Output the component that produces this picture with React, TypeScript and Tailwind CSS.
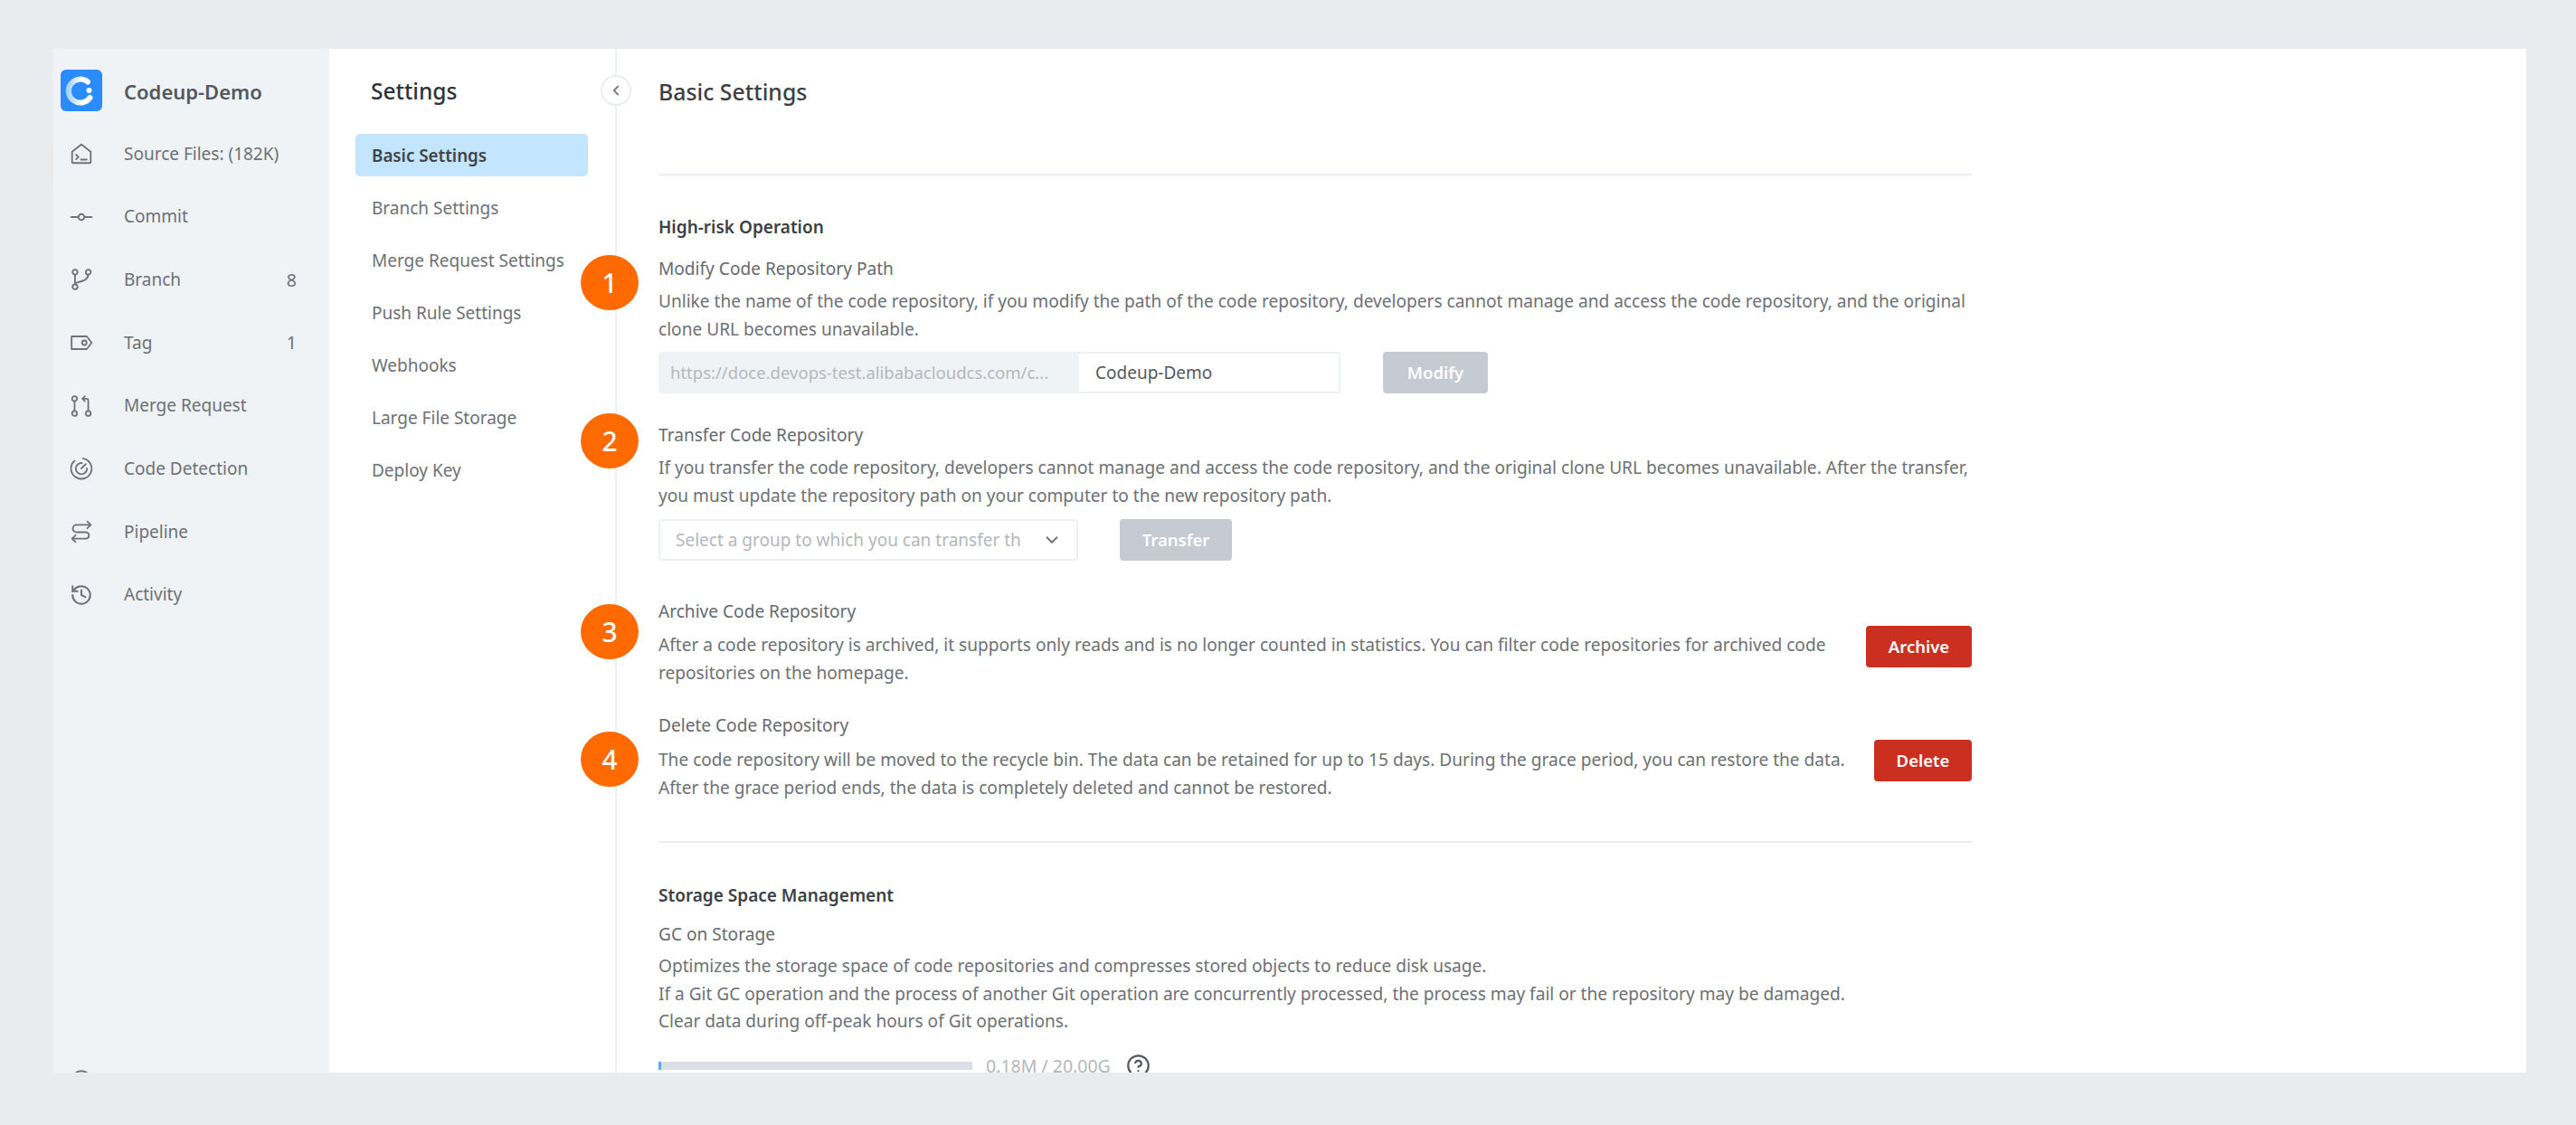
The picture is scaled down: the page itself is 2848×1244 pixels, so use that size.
import type { ReactNode } from 'react';
import { ChevronDown, ChevronLeft, CircleHelp, History } from 'lucide-react';

const font = '[font-family:"Noto_Sans",sans-serif]';

function Icon({ children }: { children: ReactNode }) {
  return (
    <svg
      width="26"
      height="26"
      viewBox="0 0 24 24"
      fill="none"
      stroke="#707377"
      strokeWidth="1.7"
      strokeLinecap="round"
      strokeLinejoin="round"
    >
      {children}
    </svg>
  );
}

const navItems: { label: string; count?: string; icon: ReactNode }[] = [
  {
    label: 'Source Files: (182K)',
    icon: (
      <Icon>
        <path d="M12 2.5 21.5 10v10.5a1 1 0 0 1-1 1h-17a1 1 0 0 1-1-1V10z" />
        <path d="m6.5 13 2.5 2.3-2.5 2.3M11.5 18h6" />
      </Icon>
    ),
  },
  {
    label: 'Commit',
    icon: (
      <Icon>
        <path d="M1.5 12h7M15.5 12h7" />
        <circle cx="12" cy="12" r="3" />
      </Icon>
    ),
  },
  {
    label: 'Branch',
    count: '8',
    icon: (
      <Icon>
        <circle cx="5.5" cy="4.5" r="2.5" />
        <circle cx="5.5" cy="19.5" r="2.5" />
        <circle cx="19" cy="4.5" r="2.5" />
        <path d="M5.5 7v10M19 7c0 5-4 6.500-13 8.500" />
      </Icon>
    ),
  },
  {
    label: 'Tag',
    count: '1',
    icon: (
      <Icon>
        <path d="M2 5.500h15.500L22.500 12l-5 6.500H2z" />
        <circle cx="15" cy="12" r="2.300" />
      </Icon>
    ),
  },
  {
    label: 'Merge Request',
    icon: (
      <Icon>
        <circle cx="5" cy="4.500" r="2.500" />
        <circle cx="5" cy="19.500" r="2.500" />
        <circle cx="19" cy="19.500" r="2.500" />
        <path d="M5 7v10M19 17V6.500a2 2 0 0 0-2-2h-4M15.500 2 13 4.500 15.500 7" />
      </Icon>
    ),
  },
  {
    label: 'Code Detection',
    icon: (
      <Icon>
        <path d="M13.500 1.700A10.500 10.500 0 1 1 5 4.200" />
        <path d="M12.500 6.500A5.700 5.700 0 1 0 17.700 12" />
        <path d="m12 12 4.500-4.500" />
      </Icon>
    ),
  },
  {
    label: 'Pipeline',
    icon: (
      <Icon>
        <path d="m18 1.500 3.500 3.500L18 8.500" />
        <path d="M21 5H7a3.500 3.500 0 0 0 0 7.500h10a3.300 3.300 0 0 1 0 6.500H3" />
        <path d="M6 15.500 2.500 19 6 22.500" />
      </Icon>
    ),
  },
  {
    label: 'Activity',
    icon: <History size={26} color="#707377" strokeWidth={1.9} />,
  },
];

const settingsItems = [
  'Basic Settings',
  'Branch Settings',
  'Merge Request Settings',
  'Push Rule Settings',
  'Webhooks',
  'Large File Storage',
  'Deploy Key',
];

function Logo() {
  return (
    <svg width="46" height="46" viewBox="0 0 46 46" className="shrink-0 rounded-[6px]">
      <defs>
        <linearGradient id="logoArc" x1="0" y1="0" x2="1" y2="0">
          <stop offset="0" stopColor="#a9d2ff" />
          <stop offset="0.6" stopColor="#ffffff" />
        </linearGradient>
      </defs>
      <rect width="46" height="46" fill="#2a8cff" />
      <path
        d="M30 13.500A13 13 0 1 0 32.500 31"
        fill="none"
        stroke="url(#logoArc)"
        strokeWidth="6"
        strokeLinecap="round"
      />
      <circle cx="31.500" cy="23" r="3" fill="#ffffff" />
    </svg>
  );
}

function Sidebar() {
  return (
    <aside className="flex w-[306px] shrink-0 flex-col overflow-hidden bg-[#f0f3f6] pl-[9px]">
      <div className="mt-[23px] flex h-[46px] items-center">
        <Logo />
        <span className="ml-[24px] pt-[3px] text-[22px] font-semibold text-[#55585c]">Codeup-Demo</span>
      </div>
      <nav className="mt-[12px] flex flex-col">
        {navItems.map((item) => (
          <div key={item.label} className="flex h-[69.700px] items-center pr-[36px]">
            <span className="flex w-[46px] shrink-0 justify-center">{item.icon}</span>
            <span className="ml-[24px] flex-1 text-[19px] text-[#6d7074]">{item.label}</span>
            {item.count && <span className="text-[19.500px] text-[#6d7074]">{item.count}</span>}
          </div>
        ))}
      </nav>
      <div className="mt-auto -mb-[19px] ml-[10px] h-[24px] w-[26px]">
        <svg width="26" height="26" viewBox="0 0 24 24" fill="none" stroke="#707377" strokeWidth="2">
          <circle cx="12" cy="12" r="9" />
        </svg>
      </div>
    </aside>
  );
}

function SettingsMenu() {
  return (
    <div className="relative w-[318px] shrink-0 border-r-2 border-[#eef1f4] pl-[29px] pr-[30px]">
      <h2 className="mt-[29px] ml-[17px] h-[36px] text-[24.500px] leading-[36px] font-medium text-[#2f3237]">Settings</h2>
      <ul className="mt-[29px] flex flex-col gap-[11px]">
        {settingsItems.map((item, i) => (
          <li
            key={item}
            className={
              i === 0
                ? 'flex h-[47px] items-center rounded-[5px] bg-[#c3e5fd] pt-[2px] pl-[18px] text-[18.800px] font-semibold text-[#40444a]'
                : 'flex h-[47px] items-center pt-[2px] pl-[18px] text-[19px] text-[#6d7074]'
            }
          >
            {item}
          </li>
        ))}
      </ul>
      <button className="absolute top-[29px] -right-[18px] flex h-[34px] w-[34px] items-center justify-center rounded-full border-2 border-[#eaeef1] bg-white">
        <ChevronLeft size={18} color="#777b80" strokeWidth={2.4} />
      </button>
    </div>
  );
}

function Badge({ n, className }: { n: number; className: string }) {
  return (
    <div
      className={`absolute -left-[86px] flex h-[61px] w-[64px] items-center justify-center rounded-[50%] bg-[#ff6a00] text-[30px] font-medium text-white ${className}`}
    >
      {n}
    </div>
  );
}

function Text({ children }: { children: ReactNode }) {
  return <p className="text-[19.100px] leading-[30.500px] whitespace-nowrap text-[#6d7074]">{children}</p>;
}

function Heading({ children }: { children: ReactNode }) {
  return <h4 className="text-[19.100px] leading-[30px] text-[#66696e]">{children}</h4>;
}

function Strong({ children }: { children: ReactNode }) {
  return <h3 className="text-[19px] leading-[30px] font-semibold text-[#3c3f44]">{children}</h3>;
}

function SolidButton({ label, className }: { label: string; className: string }) {
  return (
    <button
      className={`flex h-[46px] shrink-0 items-center justify-center rounded-[4px] text-[18.500px] font-semibold text-white ${className}`}
    >
      {label}
    </button>
  );
}

function Content() {
  return (
    <main className="min-w-0 flex-1 pl-[46px]">
      <div className="w-[1452px]">
        <h1 className="mt-[29px] h-[36px] text-[24.800px] leading-[36px] font-medium text-[#3c3f44]">Basic Settings</h1>
        <div className="mt-[73px] h-[2px] bg-[#eceff2]" />

        <div className="mt-[42px]">
          <Strong>High-risk Operation</Strong>
        </div>

        <section className="relative mt-[16px]">
          <Badge n={1} className="top-0" />
          <Heading>Modify Code Repository Path</Heading>
          <div className="mt-[6px]">
            <Text>
              Unlike the name of the code repository, if you modify the path of the code repository, developers cannot manage and access the code repository, and the original
              <br />
              clone URL becomes unavailable.
            </Text>
          </div>
          <div className="mt-[10px] flex items-center">
            <div className="flex h-[46px] w-[465px] items-center overflow-hidden rounded-l-[4px] bg-[#f0f3f6] pl-[13px] text-[18.500px] whitespace-nowrap text-[#b4b7bb]">
              https://doce.devops-test.alibabacloudcs.com/c...
            </div>
            <div className="flex h-[46px] w-[289px] items-center rounded-r-[4px] border-2 border-l-0 border-[#eef1f4] pl-[18px] text-[19px] text-[#55585c]">
              Codeup-Demo
            </div>
            <SolidButton label="Modify" className="ml-[47px] w-[116px] bg-[#c5cad3]" />
          </div>
        </section>

        <section className="relative mt-[31px]">
          <Badge n={2} className="-top-[9px]" />
          <Heading>Transfer Code Repository</Heading>
          <div className="mt-[6px]">
            <Text>
              If you transfer the code repository, developers cannot manage and access the code repository, and the original clone URL becomes unavailable. After the transfer,
              <br />
              you must update the repository path on your computer to the new repository path.
            </Text>
          </div>
          <div className="mt-[11px] flex items-center">
            <div className="flex h-[46px] w-[464px] items-center justify-between rounded-[4px] border-2 border-[#eef1f4] pr-[16px] pl-[17px] text-[19px] whitespace-nowrap text-[#b4b7bb]">
              <span className="w-[386px] overflow-hidden">Select a group to which you can transfer th</span>
              <ChevronDown size={22} color="#6d7074" strokeWidth={2} className="shrink-0" />
            </div>
            <SolidButton label="Transfer" className="ml-[46px] w-[124px] bg-[#c5cad3]" />
          </div>
        </section>

        <section className="relative mt-[41px]">
          <Badge n={3} className="top-[7px]" />
          <Heading>Archive Code Repository</Heading>
          <div className="mt-[7px] flex items-start justify-between">
            <Text>
              After a code repository is archived, it supports only reads and is no longer counted in statistics. You can filter code repositories for archived code
              <br />
              repositories on the homepage.
            </Text>
            <SolidButton label="Archive" className="-mt-[6px] w-[117px] bg-[#cb2f20]" />
          </div>
        </section>

        <section className="relative mt-[28px]">
          <Badge n={4} className="top-[22px]" />
          <Heading>Delete Code Repository</Heading>
          <div className="mt-[8px] flex items-start justify-between">
            <Text>
              The code repository will be moved to the recycle bin. The data can be retained for up to 15 days. During the grace period, you can restore the data.
              <br />
              After the grace period ends, the data is completely deleted and cannot be restored.
            </Text>
            <SolidButton label="Delete" className="-mt-[7px] w-[108px] bg-[#cb2f20]" />
          </div>
        </section>

        <div className="mt-[44px] h-[2px] bg-[#eceff2]" />

        <div className="mt-[43px]">
          <Strong>Storage Space Management</Strong>
        </div>
        <div className="mt-[13px]">
          <Heading>GC on Storage</Heading>
        </div>
        <div className="mt-[5px]">
          <Text>
            Optimizes the storage space of code repositories and compresses stored objects to reduce disk usage.
            <br />
            If a Git GC operation and the process of another Git operation are concurrently processed, the process may fail or the repository may be damaged.
            <br />
            Clear data during off-peak hours of Git operations.
          </Text>
        </div>
        <div className="mt-[19px] flex h-[30px] items-center">
          <div className="h-[9px] w-[347px] bg-[#dcdfe5]">
            <div className="h-full w-[3px] bg-[#5aa8ff]" />
          </div>
          <span className="ml-[15px] text-[19.500px] leading-[30px] text-[#b4b7bb]">0.18M / 20.00G</span>
          <CircleHelp size={27} color="#55585c" strokeWidth={2} className="ml-[17px]" />
        </div>
      </div>
    </main>
  );
}

export default function App() {
  return (
    <div className={`relative h-[1244px] w-[2848px] overflow-hidden bg-[#e9ecef] pt-[54px] pr-[55px] pb-[58px] pl-[58px] ${font}`}>
      <div className="flex h-full overflow-hidden bg-white">
        <Sidebar />
        <SettingsMenu />
        <Content />
      </div>
      <div className="absolute top-[160px] left-[57px] h-[43px] w-px bg-[#eddccd]" />
    </div>
  );
}
